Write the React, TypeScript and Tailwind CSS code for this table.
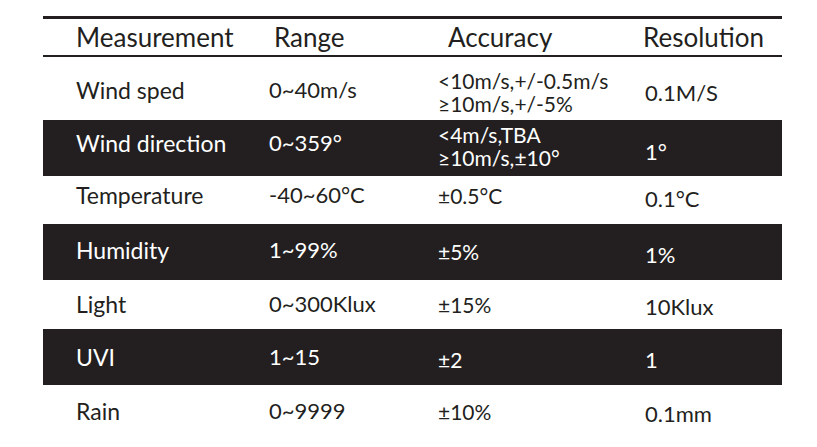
// cell top paddings follow the printed table, which isn't perfectly aligned
const rows = [
  { name: "Wind sped", range: "0~40m/s", accuracy: ["<10m/s,+/-0.5m/s", "≥10m/s,+/-5%"], resolution: "0.1M/S", dark: false, h: "h-[63px]", txt: "pt-[22px]", acc: "pt-[12px]", res: "pt-[25px]" },
  { name: "Wind direction", range: "0~359°", accuracy: ["<4m/s,TBA", "≥10m/s,±10°"], resolution: "1°", dark: true, h: "h-[56px]", txt: "pt-[12px]", acc: "pt-[3px]", res: "pt-[21px]" },
  { name: "Temperature", range: "-40~60°C", accuracy: ["±0.5°C"], resolution: "0.1°C", dark: false, h: "h-[48px]", txt: "pt-[8px]", acc: "pt-[8px]", res: "pt-[12px]" },
  { name: "Humidity", range: "1~99%", accuracy: ["±5%"], resolution: "1%", dark: true, h: "h-[56px]", txt: "pt-[15px]", acc: "pt-[16px]", res: "pt-[20px]" },
  { name: "Light", range: "0~300Klux", accuracy: ["±15%"], resolution: "10Klux", dark: false, h: "h-[49px]", txt: "pt-[13px]", acc: "pt-[13px]", res: "pt-[16px]" },
  { name: "UVI", range: "1~15", accuracy: ["±2"], resolution: "1", dark: true, h: "h-[56px]", txt: "pt-[17px]", acc: "pt-[19px]", res: "pt-[20px]" },
  { name: "Rain", range: "0~9999", accuracy: ["±10%"], resolution: "0.1mm", dark: false, h: "h-[56px]", txt: "pt-[15px]", acc: "pt-[15px]", res: "pt-[18px]" },
]

export default function App() {
  return (
    <div
      className="w-[817px] h-[447px] bg-white overflow-hidden text-[#231f20]"
      style={{ fontFamily: "Lato, 'Open Sans', sans-serif" }}
    >
      <div className="ml-[43px] mt-[16px] w-[739px]">
        {/* Header */}
        <div className="border-t-[3px] border-b-2 border-[#231f20] h-[41px] grid grid-cols-[231px_174px_195px_1fr] items-center text-[26px] leading-none">
          <span className="pl-[33px]">Measurement</span>
          <span>Range</span>
          <span>Accuracy</span>
          <span>Resolution</span>
        </div>

        {/* Rows */}
        {rows.map((r) => (
          <div
            key={r.name}
            className={`grid grid-cols-[226px_169px_207px_1fr] items-start text-[22px] leading-none ${r.h} ${
              r.dark ? "bg-[#231f20] text-white" : ""
            }`}
          >
            <span className={`pl-[33px] text-[23px] ${r.txt}`}>{r.name}</span>
            <span className={r.txt}>{r.range}</span>
            <div className={`flex flex-col text-[21px] leading-[23px] ${r.acc}`}>
              {r.accuracy.map((line) => (
                <span key={line}>{line}</span>
              ))}
            </div>
            <span className={r.res}>{r.resolution}</span>
          </div>
        ))}
      </div>
    </div>
  )
}
